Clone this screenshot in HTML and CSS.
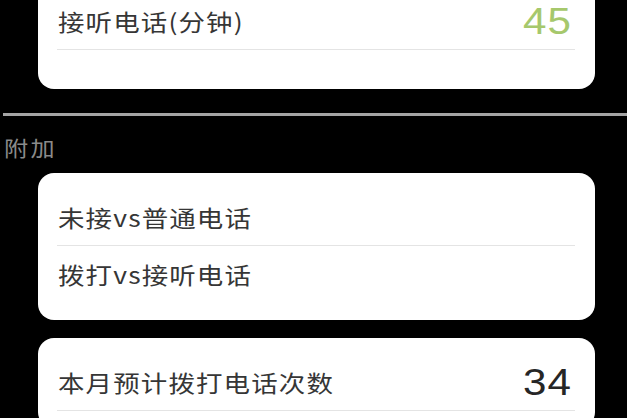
FILE: index.html
```html
<!DOCTYPE html>
<html lang="zh-CN">
<head>
<meta charset="utf-8">
<title>通话统计</title>
<link rel="stylesheet" href="styles.css">
</head>
<body>
  <main class="screen">
    <section class="card card-top">
      <div class="row">
        <span class="row-label">接听电话(分钟)</span>
        <span class="row-value value-green">45</span>
      </div>
    </section>

    <hr class="section-rule">

    <h2 class="section-title">附加</h2>

    <section class="card">
      <div class="row">
        <span class="row-label">未接vs普通电话</span>
      </div>
      <div class="row row-last">
        <span class="row-label">拨打vs接听电话</span>
      </div>
    </section>

    <section class="card">
      <div class="row">
        <span class="row-label">本月预计拨打电话次数</span>
        <span class="row-value">34</span>
      </div>
    </section>
  </main>
</body>
</html>
```

FILE: styles.css
```css
html, body {
  margin: 0;
  padding: 0;
  background: #000;
}

.screen {
  width: 627px;
  height: 418px;
  overflow: hidden;
  display: flex;
  flex-direction: column;
  font-family: "Noto Sans CJK SC", "Noto Sans", sans-serif;
}

.card {
  margin: 0 32px 0 38px;
  padding: 16px 0 17px;
  background: #fff;
  border-radius: 16px;
  flex: none;
}

.card + .card {
  margin-top: 18px;
}

.card-top {
  margin-top: -23px;
  padding-bottom: 39px;
}

.row {
  box-sizing: border-box;
  height: 57px;
  margin: 0 20px 0 19px;
  padding-left: 1px;
  display: flex;
  align-items: center;
  justify-content: space-between;
  border-bottom: 1px solid #e4e4e4;
}

.row-last {
  border-bottom: none;
}

/* the app renders its type slightly wide */
.row-label {
  font-size: 23px;
  font-weight: 400;
  letter-spacing: 1px;
  color: #363636;
  line-height: 1;
  transform: scaleX(1.15);
  transform-origin: left center;
}

.row-value {
  font-family: "Liberation Sans", Arial, sans-serif;
  font-size: 37px;
  letter-spacing: 1px;
  line-height: 1;
  color: #262626;
  transform: scaleX(1.14);
  transform-origin: right center;
  margin-right: 3px;
}

.value-green {
  color: #a6c86c;
}

.section-rule {
  flex: none;
  margin: 24px 0 0 3px;
  height: 3px;
  border: none;
  background: #a4a4a4;
}

.section-title {
  flex: none;
  margin: 18px 0 13px 4px;
  font-size: 21px;
  line-height: 26px;
  font-weight: 400;
  letter-spacing: 2px;
  color: #8a8a8a;
  transform: scaleX(1.15);
  transform-origin: left center;
}
```
